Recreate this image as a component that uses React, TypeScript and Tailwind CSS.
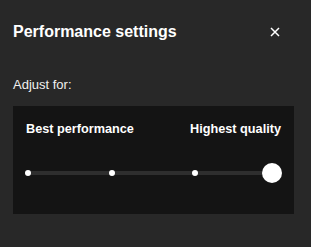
import { useState } from "react";

const stops = [0, 84, 167];

export default function App() {
  const [value] = useState(3);

  return (
    <div
      className="h-[247px] w-[311px] bg-[#282828] pl-[13px] pr-[17px] text-white"
      style={{ fontFamily: '"Liberation Sans", Arial, sans-serif' }}
    >
      <div className="flex items-center justify-between pt-[22px]">
        <h2 className="text-[16px] font-bold leading-5">Performance settings</h2>
        <button type="button" aria-label="Close" className="mr-[14px] text-white">
          <svg width="10" height="10" viewBox="0 0 10 10" fill="none">
            <path d="M1 1L9 9M9 1L1 9" stroke="currentColor" strokeWidth="1.5" />
          </svg>
        </button>
      </div>

      <p className="mt-[35px] text-[13px] leading-4 text-[#f0f0f0]">Adjust for:</p>

      <div className="mt-[13px] h-[108px] bg-[#141414] px-[13px] pt-[15px]">
        <div className="flex justify-between text-[12.7px] font-bold leading-4">
          <span>Best performance</span>
          <span>Highest quality</span>
        </div>

        {/* slider, 4 steps */}
        <div className="relative mx-[-1px] mt-[26px] h-5">
          <div className="absolute left-[3px] right-[10px] top-2 h-1 bg-[#2e2e2e]" />
          {stops.map((left, i) =>
            i === value ? null : (
              <span
                key={left}
                className="absolute top-[7px] h-[6px] w-[6px] rounded-full bg-white"
                style={{ left }}
              />
            )
          )}
          <span className="absolute right-0 top-0 h-5 w-5 rounded-full bg-white" />
        </div>
      </div>
    </div>
  );
}
